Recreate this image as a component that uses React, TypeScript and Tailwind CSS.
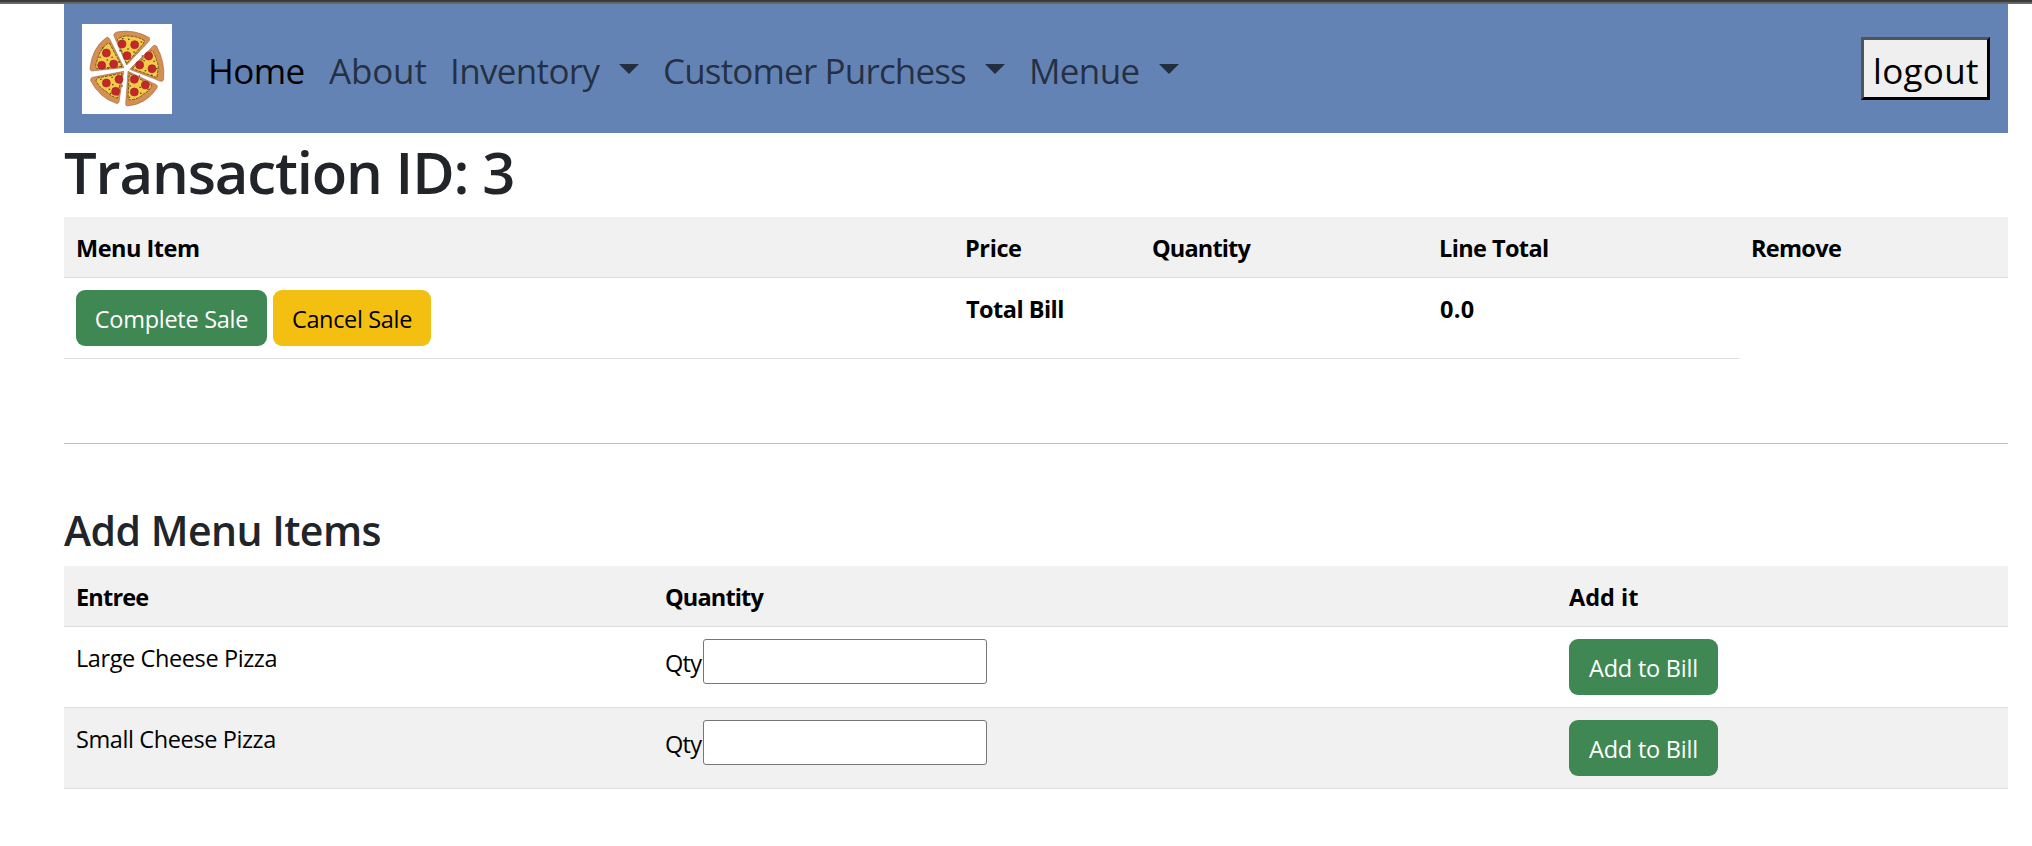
import type { ReactNode } from "react";

const SLICES = [
  "M230 195 L191 106 Q192 98 200 96 Q252 86 298 113 Q301 120 295 126 Z",
  "M239 208 L310 137 Q316 134 320 139 Q346 186 341 238 Q339 246 332 244 Z",
  "M234 214 L319 254 Q325 258 321 264 Q290 312 234 318 Q227 319 227 311 Z",
  "M221 214 L207 306 Q205 312 198 310 Q147 292 122 242 Q120 235 127 232 Z",
  "M222 203 L125 213 Q119 212 120 204 Q127 142 170 112 Q176 111 179 117 Z",
];
const CHEESE = [
  "M230 191 L202 118 Q224 104 240 109 Q262 108 283 122 L280 131 Z",
  "M247 206 L306 151 Q316 164 319 180 Q328 196 323 214 L321 233 Z",
  "M238 221 L306 256 Q298 274 280 282 Q266 298 238 300 L234 292 Z",
  "M216 220 L202 294 Q184 290 170 275 Q147 262 138 242 L142 234 Z",
  "M216 199 L140 206 Q134 196 142 180 Q149 148 172 131 L178 129 Z",
];
const PEPPERONI = [
  [216, 132], [254, 134], [231, 167], [296, 168], [269, 195],
  [306, 206], [253, 238], [286, 255], [253, 276], [207, 238],
  [169, 249], [197, 274], [169, 159], [155, 196], [191, 192],
];
const HERBS = [
  [236, 118], [210, 152], [252, 156], [234, 147], [274, 126], [218, 116],
  [282, 182], [312, 184], [286, 212], [305, 226], [277, 168], [320, 206],
  [268, 228], [270, 262], [240, 258], [272, 280], [294, 268], [238, 292],
  [186, 232], [188, 254], [152, 238], [178, 268], [216, 258], [182, 280],
  [186, 172], [150, 172], [172, 180], [174, 204], [206, 186], [158, 144],
];

function PizzaLogo() {
  return (
    <svg viewBox="96 72 270 270" className="mt-px size-[90px] shrink-0 bg-white" aria-hidden="true">
      {SLICES.map((d) => (
        <path key={d} d={d} fill="#d58f52" stroke="#8a5a36" strokeWidth="1.5" />
      ))}
      {CHEESE.map((d) => (
        <path key={d} d={d} fill="#f3cb48" stroke="#5b4a1c" strokeWidth="2.5" strokeDasharray="9 3" />
      ))}
      {HERBS.map(([x, y]) => (
        <rect key={`${x}-${y}`} x={x - 2} y={y - 2} width="4.5" height="4" fill="#55501c" />
      ))}
      {PEPPERONI.map(([x, y]) => (
        <circle key={`${x}-${y}`} cx={x} cy={y} r="12" fill="#c4262b" stroke="#a02a20" strokeWidth="2" />
      ))}
    </svg>
  );
}

function NavDropdown({ className, children }: { className: string; children: ReactNode }) {
  return (
    <a className={`flex items-center justify-between whitespace-nowrap text-black/65 ${className}`}>
      {children}
      <svg viewBox="0 0 20 10" className="mb-[3px] h-2.5 w-5 shrink-0" aria-hidden="true">
        <path d="M0 0H20L10 10Z" fill="currentColor" />
      </svg>
    </a>
  );
}

function AddRow({ name, tracking, striped }: { name: string; tracking: string; striped?: boolean }) {
  return (
    <div
      className={`grid h-[81px] grid-cols-[588px_905px_451px] border-b border-[#dcdee0] pt-3 leading-[39px] ${striped ? "bg-[#f1f1f1]" : ""}`}
    >
      <div className={`pl-3 ${tracking}`}>{name}</div>
      <label className="flex items-start pl-[13px]">
        <span className="w-[38px] pt-[5px] tracking-[-0.7px]">Qty</span>
        <input className="h-[45px] w-[284px] rounded-[3px] border border-[#767676] bg-white" />
      </label>
      <div className="pl-3">
        <button className="h-14 w-[149px] rounded-[9px] bg-[#3f8753] pt-0.5 leading-[37px] tracking-[-0.22px] text-white">
          Add to Bill
        </button>
      </div>
    </div>
  );
}

export default function App() {
  return (
    <div className="min-h-[846px] bg-white font-['Open_Sans',sans-serif] text-[23.5px] text-black">
      <div className="h-1 border-b-2 border-[#666666] bg-[#3b3b3b]" />
      <main className="ml-16 w-[1944px]">
        <nav className="flex h-[129px] items-center bg-[#6483b5] px-[18px] text-[35px] leading-[54px]">
          <PizzaLogo />
          <div className="ml-9 flex gap-6 pt-1">
            <a className="w-[97px] tracking-[-0.6px]">Home</a>
            <a className="w-[97px] tracking-[-0.17px] text-black/65">About</a>
            <NavDropdown className="w-[189px] tracking-[-0.65px]">Inventory</NavDropdown>
            <NavDropdown className="w-[342px] tracking-[-0.84px]">Customer Purchess</NavDropdown>
            <NavDropdown className="w-[150px] tracking-[-0.65px]">Menue</NavDropdown>
          </div>
          <button className="ml-auto h-[63px] w-[129px] border-[3px] border-t-[#505357] border-r-black border-b-black border-l-[#505357] bg-[#efefef] pt-1 pl-[9px] text-left leading-[53px] tracking-[0.3px]">
            logout
          </button>
        </nav>

        <h1 className="h-[84px] text-[58px] leading-[77px] font-semibold tracking-[-1.15px] text-[#212529]">
          Transaction ID: 3
        </h1>

        <section>
          <div className="grid h-[61px] grid-cols-[889px_187px_287px_312px_257px] border-b border-[#dcdee0] bg-[#f1f1f1] pt-3 pl-3 leading-[39px] font-bold">
            <div className="tracking-[-0.5px]">Menu Item</div>
            <div className="tracking-[-0.4px]">Price</div>
            <div className="tracking-[-0.85px]">Quantity</div>
            <div className="tracking-[-0.6px]">Line Total</div>
            <div className="tracking-[-0.7px]">Remove</div>
          </div>
          <div className="grid h-[81px] w-[1675px] grid-cols-[890px_474px_299px] border-b border-[#dcdee0] pt-3 pl-3 leading-[39px] font-bold">
            <div className="flex gap-1.5 leading-[37px] font-normal">
              <button className="h-14 w-[191px] rounded-[9px] bg-[#3f8753] pt-0.5 tracking-[-0.28px] text-white">
                Complete Sale
              </button>
              <button className="h-14 w-[158px] rounded-[9px] bg-[#f3bf10] pt-0.5 tracking-[-0.34px]">
                Cancel Sale
              </button>
            </div>
            <div className="tracking-[-0.53px]">Total Bill</div>
            <div className="tracking-[0.3px]">0.0</div>
          </div>
        </section>

        <hr className="mt-[84px] border-[#c0c2c4]" />

        <h2 className="mt-[61px] mb-[11px] text-[41px] leading-[50px] font-semibold tracking-[-0.53px] text-[#212529]">
          Add Menu Items
        </h2>

        <section>
          <div className="grid h-[61px] grid-cols-[588px_905px_439px] border-b border-[#dcdee0] bg-[#f1f1f1] pt-3 pl-3 leading-[39px] font-bold">
            <div className="tracking-[-0.8px]">Entree</div>
            <div className="pl-px tracking-[-0.85px]">Quantity</div>
            <div>Add it</div>
          </div>
          <AddRow name="Large Cheese Pizza" tracking="tracking-[-0.4px]" />
          <AddRow name="Small Cheese Pizza" tracking="tracking-[-0.39px]" striped />
        </section>
      </main>
    </div>
  );
}
